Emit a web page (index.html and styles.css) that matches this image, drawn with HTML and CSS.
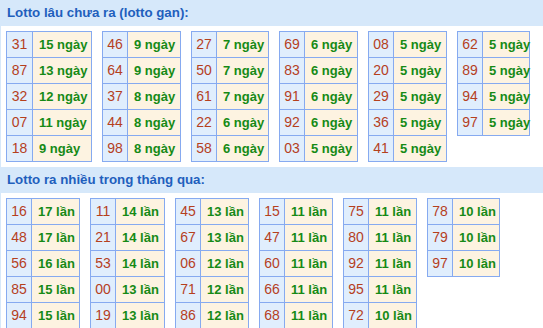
FILE: index.html
```html
<!DOCTYPE html>
<html lang="vi">
<head>
<meta charset="utf-8">
<link rel="stylesheet" href="styles.css">
</head>
<body>
<div class="wrap">
  <div class="title">Lotto lâu chưa ra (lotto gan):</div>
  <div class="tables g1">
    <table class="t"><tr><td class="n">31</td><td class="v">15 ngày</td></tr><tr><td class="n">87</td><td class="v">13 ngày</td></tr><tr><td class="n">32</td><td class="v">12 ngày</td></tr><tr><td class="n">07</td><td class="v">11 ngày</td></tr><tr><td class="n">18</td><td class="v">9 ngày</td></tr></table>
    <table class="t"><tr><td class="n">46</td><td class="v">9 ngày</td></tr><tr><td class="n">64</td><td class="v">9 ngày</td></tr><tr><td class="n">37</td><td class="v">8 ngày</td></tr><tr><td class="n">44</td><td class="v">8 ngày</td></tr><tr><td class="n">98</td><td class="v">8 ngày</td></tr></table>
    <table class="t"><tr><td class="n">27</td><td class="v">7 ngày</td></tr><tr><td class="n">50</td><td class="v">7 ngày</td></tr><tr><td class="n">61</td><td class="v">7 ngày</td></tr><tr><td class="n">22</td><td class="v">6 ngày</td></tr><tr><td class="n">58</td><td class="v">6 ngày</td></tr></table>
    <table class="t"><tr><td class="n">69</td><td class="v">6 ngày</td></tr><tr><td class="n">83</td><td class="v">6 ngày</td></tr><tr><td class="n">91</td><td class="v">6 ngày</td></tr><tr><td class="n">92</td><td class="v">6 ngày</td></tr><tr><td class="n">03</td><td class="v">5 ngày</td></tr></table>
    <table class="t"><tr><td class="n">08</td><td class="v">5 ngày</td></tr><tr><td class="n">20</td><td class="v">5 ngày</td></tr><tr><td class="n">29</td><td class="v">5 ngày</td></tr><tr><td class="n">36</td><td class="v">5 ngày</td></tr><tr><td class="n">41</td><td class="v">5 ngày</td></tr></table>
    <table class="t"><tr><td class="n">62</td><td class="v">5 ngày</td></tr><tr><td class="n">89</td><td class="v">5 ngày</td></tr><tr><td class="n">94</td><td class="v">5 ngày</td></tr><tr><td class="n">97</td><td class="v">5 ngày</td></tr></table>
  </div>
  <div class="title">Lotto ra nhiều trong tháng qua:</div>
  <div class="tables g2">
    <table class="t"><tr><td class="n">16</td><td class="v">17 lần</td></tr><tr><td class="n">48</td><td class="v">17 lần</td></tr><tr><td class="n">56</td><td class="v">16 lần</td></tr><tr><td class="n">85</td><td class="v">15 lần</td></tr><tr><td class="n">94</td><td class="v">15 lần</td></tr></table>
    <table class="t"><tr><td class="n">11</td><td class="v">14 lần</td></tr><tr><td class="n">21</td><td class="v">14 lần</td></tr><tr><td class="n">53</td><td class="v">14 lần</td></tr><tr><td class="n">00</td><td class="v">13 lần</td></tr><tr><td class="n">19</td><td class="v">13 lần</td></tr></table>
    <table class="t"><tr><td class="n">45</td><td class="v">13 lần</td></tr><tr><td class="n">67</td><td class="v">13 lần</td></tr><tr><td class="n">06</td><td class="v">12 lần</td></tr><tr><td class="n">71</td><td class="v">12 lần</td></tr><tr><td class="n">86</td><td class="v">12 lần</td></tr></table>
    <table class="t"><tr><td class="n">15</td><td class="v">11 lần</td></tr><tr><td class="n">47</td><td class="v">11 lần</td></tr><tr><td class="n">60</td><td class="v">11 lần</td></tr><tr><td class="n">66</td><td class="v">11 lần</td></tr><tr><td class="n">68</td><td class="v">11 lần</td></tr></table>
    <table class="t"><tr><td class="n">75</td><td class="v">11 lần</td></tr><tr><td class="n">80</td><td class="v">11 lần</td></tr><tr><td class="n">92</td><td class="v">11 lần</td></tr><tr><td class="n">95</td><td class="v">11 lần</td></tr><tr><td class="n">72</td><td class="v">10 lần</td></tr></table>
    <table class="t"><tr><td class="n">78</td><td class="v">10 lần</td></tr><tr><td class="n">79</td><td class="v">10 lần</td></tr><tr><td class="n">97</td><td class="v">10 lần</td></tr></table>
  </div>
</div>
</body>
</html>
```
FILE: styles.css
```css
html, body {
  margin: 0;
  padding: 0;
  background: #ffffff;
}
.wrap {
  border-left: 1px solid #d6e8fa;
  font-family: "Liberation Sans", Arial, sans-serif;
}
.title {
  background: #d6e8fa;
  color: #1f5fbd;
  font-size: 13.3px;
  font-weight: bold;
  height: 26px;
  line-height: 26px;
  padding-left: 6px;
}
.tables {
  display: grid;
  align-items: start;
  column-gap: 10px;
  padding: 5px 0 5px 5px;
}
.g1 {
  grid-template-columns: 86px 79px 78px 79px 79px 73px;
}
.g2 {
  grid-template-columns: 74px 75px 74px 74px 74px 73px;
}
.t {
  border-collapse: collapse;
  table-layout: fixed;
  width: 100%;
}
.t td {
  border: 1px solid #86aaf0;
  padding: 5px 0;
  line-height: 15px;
  white-space: nowrap;
}
.t td.n {
  width: 24px;
  background: #e0eefd;
  color: #b5401d;
  font-size: 14px;
  text-align: center;
}
.g1 .t:first-child td.n {
  width: 25px;
}
.t td.v {
  padding-left: 6px;
  background: #fdf3e1;
  color: #168a16;
  font-size: 13px;
  font-weight: bold;
}
```
